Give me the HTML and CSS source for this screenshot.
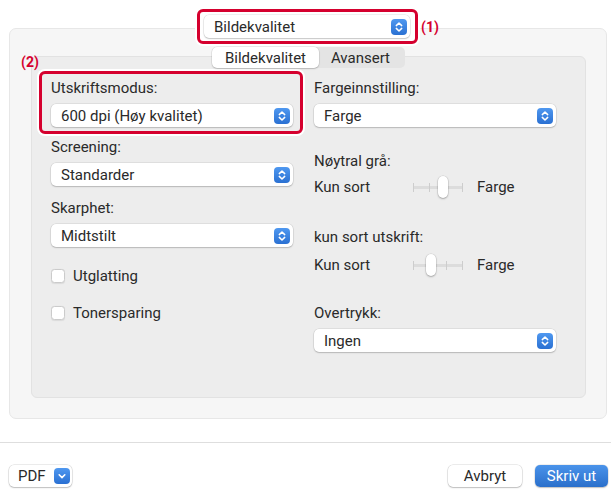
FILE: index.html
```html
<!DOCTYPE html>
<html lang="no">
<head>
<meta charset="utf-8">
<title>Bildekvalitet</title>
<link rel="stylesheet" href="styles.css">
</head>
<body>
<div class="dialog">
  <div class="top">
    <div class="mark mark-1">
      <div class="popup popup-top">
        <span>Bildekvalitet</span>
        <span class="stepper"><svg width="16" height="16" viewBox="0 0 16 16"><path d="M5.3 6.6 8 4 10.7 6.6M5.3 9.4 8 12 10.7 9.4" fill="none" stroke="#fff" stroke-width="1.5" stroke-linecap="round" stroke-linejoin="round"/></svg></span>
      </div>
      <span class="callout callout-1">(1)</span>
    </div>
  </div>

  <div class="panel">
    <div class="tabs">
      <div class="tab tab-active">Bildekvalitet</div>
      <div class="tab tab-plain">Avansert</div>
    </div>
    <div class="box">
      <div class="col">
        <div class="mark mark-2">
          <span class="callout callout-2">(2)</span>
          <div class="label">Utskriftsmodus:</div>
          <div class="popup field">
            <span>600 dpi (Høy kvalitet)</span>
            <span class="stepper"><svg width="16" height="16" viewBox="0 0 16 16"><path d="M5.3 6.6 8 4 10.7 6.6M5.3 9.4 8 12 10.7 9.4" fill="none" stroke="#fff" stroke-width="1.5" stroke-linecap="round" stroke-linejoin="round"/></svg></span>
          </div>
        </div>
        <div class="label m4">Screening:</div>
        <div class="popup field">
          <span>Standarder</span>
          <span class="stepper"><svg width="16" height="16" viewBox="0 0 16 16"><path d="M5.3 6.6 8 4 10.7 6.6M5.3 9.4 8 12 10.7 9.4" fill="none" stroke="#fff" stroke-width="1.5" stroke-linecap="round" stroke-linejoin="round"/></svg></span>
        </div>
        <div class="label m13">Skarphet:</div>
        <div class="popup field">
          <span>Midtstilt</span>
          <span class="stepper"><svg width="16" height="16" viewBox="0 0 16 16"><path d="M5.3 6.6 8 4 10.7 6.6M5.3 9.4 8 12 10.7 9.4" fill="none" stroke="#fff" stroke-width="1.5" stroke-linecap="round" stroke-linejoin="round"/></svg></span>
        </div>
        <label class="check m20"><span class="box-check"></span>Utglatting</label>
        <label class="check m19"><span class="box-check"></span>Tonersparing</label>
      </div>

      <div class="col col-right">
        <div class="label m8">Fargeinnstilling:</div>
        <div class="popup field">
          <span>Farge</span>
          <span class="stepper"><svg width="16" height="16" viewBox="0 0 16 16"><path d="M5.3 6.6 8 4 10.7 6.6M5.3 9.4 8 12 10.7 9.4" fill="none" stroke="#fff" stroke-width="1.5" stroke-linecap="round" stroke-linejoin="round"/></svg></span>
        </div>
        <div class="label m25">Nøytral grå:</div>
        <div class="srow m8">
          <span class="slabel">Kun sort</span>
          <span class="slider"><i></i><i></i><i></i><i></i><b class="thumb" style="left:25px"></b></span>
          <span>Farge</span>
        </div>
        <div class="label m32">kun sort utskrift:</div>
        <div class="srow m10">
          <span class="slabel">Kun sort</span>
          <span class="slider"><i></i><i></i><i></i><i></i><b class="thumb" style="left:13px"></b></span>
          <span>Farge</span>
        </div>
        <div class="label m30">Overtrykk:</div>
        <div class="popup field">
          <span>Ingen</span>
          <span class="stepper"><svg width="16" height="16" viewBox="0 0 16 16"><path d="M5.3 6.6 8 4 10.7 6.6M5.3 9.4 8 12 10.7 9.4" fill="none" stroke="#fff" stroke-width="1.5" stroke-linecap="round" stroke-linejoin="round"/></svg></span>
        </div>
      </div>
    </div>
  </div>

  <div class="sep"></div>

  <div class="footer">
    <div class="btn btn-pdf">PDF<span class="pdf-arrow"><svg width="16" height="16" viewBox="0 0 16 16"><path d="M5.2 6.8 8 9.6 10.8 6.8" fill="none" stroke="#fff" stroke-width="1.6" stroke-linecap="round" stroke-linejoin="round"/></svg></span></div>
    <div class="btn btn-cancel">Avbryt</div>
    <div class="btn btn-print">Skriv ut</div>
  </div>
</div>
</body>
</html>
```

FILE: styles.css
```css
* { box-sizing: border-box; }

body {
  margin: 0;
  background: #ffffff;
  font-family: Roboto, "Liberation Sans", Arial, sans-serif;
  font-size: 15px;
  color: #2a2a2a;
}

.dialog {
  width: 611px;
  height: 494px;
  display: flex;
  flex-direction: column;
}

/* top popup */
.top {
  display: flex;
  justify-content: center;
  padding: 9px 0 0 4px;
  position: relative;
  z-index: 2;
}

.mark {
  position: relative;
  border: 3px solid #d5002e;
  border-radius: 6px;
  box-shadow: 0 0 0 2px #ffffff;
}

.mark-1 {
  padding: 3px 5px 3px 4px;
  background: #ffffff;
}

.callout {
  position: absolute;
  color: #d5002e;
  font-weight: bold;
  font-size: 14px;
  line-height: 18px;
  white-space: nowrap;
}

.callout-1 { left: calc(100% + 6px); top: 6px; }
.callout-2 { left: -21px; top: -21px; }

.popup {
  height: 23px;
  background: #ffffff;
  border-radius: 5px;
  box-shadow: 0 0 0 0.5px rgba(0, 0, 0, 0.12), 0 1px 1.5px rgba(0, 0, 0, 0.18);
  display: flex;
  align-items: center;
  justify-content: space-between;
  padding: 0 3px 0 10px;
  line-height: 18px;
}

.popup-top { width: 206px; }

.field { margin-top: 7px; }

.stepper {
  width: 16px;
  height: 16px;
  border-radius: 4px;
  background: linear-gradient(#4f98f0, #2a70d2);
  display: flex;
}

/* panel */
.panel {
  margin: -16px 4px 0 9px;
  height: 391px;
  background: #f6f6f6;
  border: 1px solid #e7e7e7;
  border-radius: 7px;
  padding: 18px 20px 20px 21px;
  display: flex;
  flex-direction: column;
}

.tabs {
  align-self: center;
  display: flex;
  height: 21px;
  background: #e4e4e4;
  border-radius: 5px;
  position: relative;
  z-index: 1;
}

.tab {
  display: flex;
  align-items: center;
  justify-content: center;
  line-height: 18px;
}

.tab-active {
  width: 107px;
  background: #ffffff;
  border-radius: 5px;
  box-shadow: 0 0 0 0.5px rgba(0, 0, 0, 0.1), 0 1px 1.5px rgba(0, 0, 0, 0.18);
}

.tab-plain { width: 86px; padding-right: 3px; }

.box {
  margin-top: -12px;
  flex: 1;
  background: #ededed;
  border: 1px solid #e2e2e2;
  border-radius: 6px;
  display: flex;
  gap: 21px;
  padding: 14px 0 0 19px;
}

.col {
  width: 242px;
  display: flex;
  flex-direction: column;
}

.mark-2 {
  margin: 0 -10px 0 -12px;
  padding: 5px 7px 4px 9px;
}

.label { line-height: 18px; }

.m4 { margin-top: 4px; }
.m8 { margin-top: 8px; }
.m10 { margin-top: 10px; }
.m13 { margin-top: 13px; }
.m19 { margin-top: 19px; }
.m20 { margin-top: 20px; }
.m25 { margin-top: 25px; }
.m30 { margin-top: 30px; }
.m32 { margin-top: 32px; }

.check {
  display: flex;
  align-items: center;
  height: 18px;
  gap: 8px;
}

.box-check {
  width: 14px;
  height: 14px;
  background: #ffffff;
  border: 1px solid #cbcbcb;
  border-radius: 3.5px;
  box-shadow: 0 0.5px 1px rgba(0, 0, 0, 0.08);
}

/* sliders */
.srow {
  display: flex;
  align-items: center;
  height: 18px;
  line-height: 18px;
}

.slabel { width: 99px; }

.slider {
  position: relative;
  width: 50px;
  height: 18px;
  margin-right: 14px;
  display: flex;
  align-items: center;
  justify-content: space-between;
  background: linear-gradient(#dcdcdc, #dcdcdc) center / 100% 3px no-repeat;
}

.slider i {
  width: 1px;
  height: 9px;
  background: #cdcdcd;
}

.thumb {
  position: absolute;
  top: -2px;
  width: 10px;
  height: 22px;
  background: #ffffff;
  border-radius: 5px;
  box-shadow: 0 0 0 0.5px rgba(0, 0, 0, 0.12), 0 1px 2px rgba(0, 0, 0, 0.25);
}

/* footer */
.sep {
  height: 1px;
  background: #dedede;
  margin-top: 23px;
}

.footer {
  display: flex;
  padding: 22px 3px 0 9px;
}

.btn {
  height: 22px;
  border-radius: 5px;
  background: #ffffff;
  box-shadow: 0 0 0 0.5px rgba(0, 0, 0, 0.15), 0 1px 1.5px rgba(0, 0, 0, 0.2);
  display: flex;
  align-items: center;
  justify-content: center;
  line-height: 18px;
}

.btn-pdf {
  width: 63px;
  justify-content: flex-start;
  padding: 0 3px 0 9px;
  gap: 8px;
}

.pdf-arrow {
  width: 16px;
  height: 16px;
  border-radius: 4px;
  background: linear-gradient(#4f98f0, #2a70d2);
  display: flex;
}

.btn-cancel {
  margin-left: auto;
  width: 74px;
}

.btn-print {
  margin-left: 13px;
  width: 73px;
  color: #ffffff;
  background: linear-gradient(#4a93ea, #2a6fcb);
  box-shadow: 0 0 0 0.5px rgba(0, 0, 0, 0.12), 0 1px 1.5px rgba(0, 0, 0, 0.2);
}
```
